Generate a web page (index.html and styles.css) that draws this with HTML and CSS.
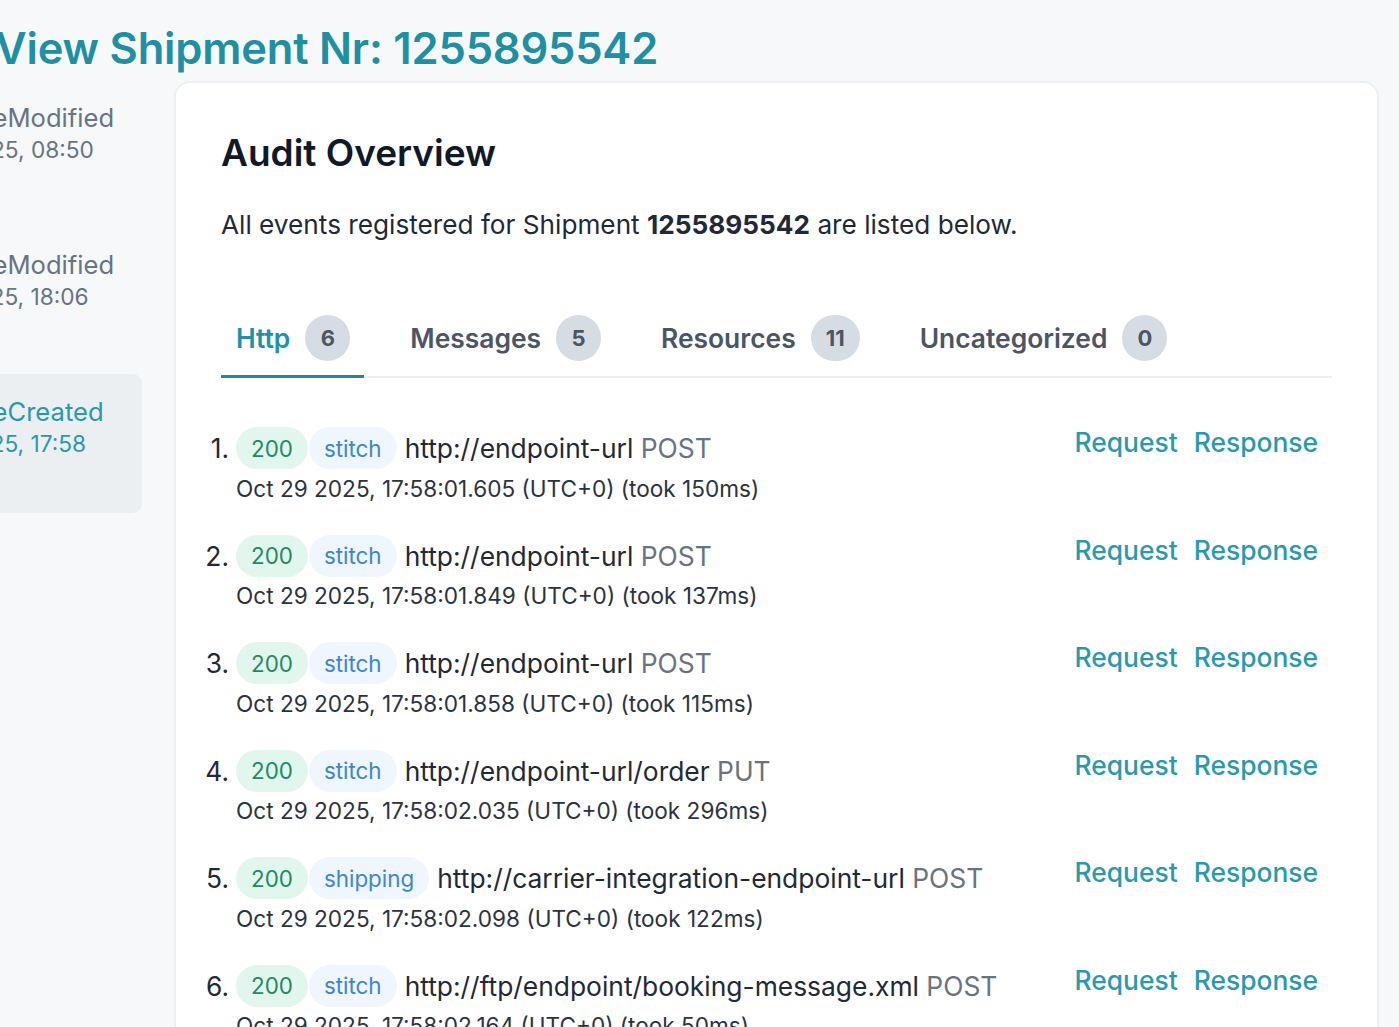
FILE: index.html
```html
<!DOCTYPE html>
<html lang="en">
<head>
<meta charset="utf-8">
<title>View Shipment</title>
<link rel="stylesheet" href="styles.css">
</head>
<body>
<div class="page">
  <h1 class="title">View Shipment Nr: 1255895542</h1>
  <div class="layout">
    <aside class="sidebar">
      <div class="event">
        <div class="event-name">ReferenceModified</div>
        <div class="event-date">Oct 30 2025, 08:50</div>
      </div>
      <div class="event">
        <div class="event-name">ReferenceModified</div>
        <div class="event-date">Oct 29 2025, 18:06</div>
      </div>
      <div class="event active">
        <div class="event-name">ReferenceCreated</div>
        <div class="event-date">Oct 29 2025, 17:58</div>
      </div>
    </aside>
    <main class="card">
      <h2 class="card-title">Audit Overview</h2>
      <p class="intro">All events registered for Shipment <strong>1255895542</strong> are listed below.</p>
      <nav class="tabs">
        <div class="tab active">Http <span class="count">6</span></div>
        <div class="tab">Messages <span class="count">5</span></div>
        <div class="tab">Resources <span class="count">11</span></div>
        <div class="tab">Uncategorized <span class="count">0</span></div>
      </nav>
      <ol class="calls">
        <li class="call">
          <div class="call-main">
            <div class="call-line"><span class="num">1.</span><span class="badge ok">200</span><span class="badge src">stitch</span><span class="url">http://endpoint-url <span class="method">POST</span></span></div>
            <div class="call-time">Oct 29 2025, 17:58:01.605 (UTC+0) (took 150ms)</div>
          </div>
          <div class="links"><a>Request</a><a>Response</a></div>
        </li>
        <li class="call">
          <div class="call-main">
            <div class="call-line"><span class="num">2.</span><span class="badge ok">200</span><span class="badge src">stitch</span><span class="url">http://endpoint-url <span class="method">POST</span></span></div>
            <div class="call-time">Oct 29 2025, 17:58:01.849 (UTC+0) (took 137ms)</div>
          </div>
          <div class="links"><a>Request</a><a>Response</a></div>
        </li>
        <li class="call">
          <div class="call-main">
            <div class="call-line"><span class="num">3.</span><span class="badge ok">200</span><span class="badge src">stitch</span><span class="url">http://endpoint-url <span class="method">POST</span></span></div>
            <div class="call-time">Oct 29 2025, 17:58:01.858 (UTC+0) (took 115ms)</div>
          </div>
          <div class="links"><a>Request</a><a>Response</a></div>
        </li>
        <li class="call">
          <div class="call-main">
            <div class="call-line"><span class="num">4.</span><span class="badge ok">200</span><span class="badge src">stitch</span><span class="url">http://endpoint-url/order <span class="method">PUT</span></span></div>
            <div class="call-time">Oct 29 2025, 17:58:02.035 (UTC+0) (took 296ms)</div>
          </div>
          <div class="links"><a>Request</a><a>Response</a></div>
        </li>
        <li class="call">
          <div class="call-main">
            <div class="call-line"><span class="num">5.</span><span class="badge ok">200</span><span class="badge src">shipping</span><span class="url">http://carrier-integration-endpoint-url <span class="method">POST</span></span></div>
            <div class="call-time">Oct 29 2025, 17:58:02.098 (UTC+0) (took 122ms)</div>
          </div>
          <div class="links"><a>Request</a><a>Response</a></div>
        </li>
        <li class="call">
          <div class="call-main">
            <div class="call-line"><span class="num">6.</span><span class="badge ok">200</span><span class="badge src">stitch</span><span class="url">http://ftp/endpoint/booking-message.xml <span class="method">POST</span></span></div>
            <div class="call-time">Oct 29 2025, 17:58:02.164 (UTC+0) (took 50ms)</div>
          </div>
          <div class="links"><a>Request</a><a>Response</a></div>
        </li>
      </ol>
    </main>
  </div>
</div>
</body>
</html>
```

FILE: styles.css
```css
html, body {
  margin: 0;
  padding: 0;
}

body {
  background: #f7f8fa;
  font-family: Inter, "Noto Sans", sans-serif;
  color: #1f2937;
  overflow: hidden;
  height: 1027px;
}

.page {
  margin-left: -116px;
  padding-right: 20px;
}

.title {
  margin: 0 0 4px 111px;
  font-size: 43.5px;
  line-height: 56px;
  font-weight: 600;
  color: #1f8fa1;
  padding-top: 20px;
  letter-spacing: -0.2px;
}

.layout {
  display: flex;
  gap: 32px;
  align-items: flex-start;
}

.sidebar {
  width: 258px;
  flex: none;
  display: flex;
  flex-direction: column;
  gap: 8px;
}

.event {
  height: 139px;
  box-sizing: border-box;
  padding: 22px 0 0 0;
  border-radius: 9px;
  color: #687384;
  white-space: nowrap;
}

.event.active {
  background: #eceff2;
  color: #2a98ab;
}

.event-name {
  font-size: 25.6px;
  line-height: 32px;
}

.event-date {
  font-size: 22.7px;
  line-height: 31px;
}

.card {
  flex: 1;
  margin-top: 1px;
  background: #ffffff;
  border: 2px solid #eceff3;
  border-radius: 16px;
  padding: 46px 45px 0 45px;
  min-height: 1000px;
}

.card-title {
  margin: 0;
  font-size: 37px;
  line-height: 48px;
  font-weight: 600;
  color: #111827;
}

.intro {
  margin: 28px 0 0 0;
  font-size: 26.2px;
  line-height: 40px;
  color: #1f2937;
}

.intro strong {
  font-weight: 700;
}

.tabs {
  display: flex;
  gap: 31px;
  margin-top: 54px;
  border-bottom: 2px solid #ebeff3;
}

.tab {
  display: flex;
  align-items: center;
  gap: 15px;
  padding: 16px 14px 14px 15px;
  margin-bottom: -2px;
  border-bottom: 3px solid transparent;
  font-size: 26.4px;
  font-weight: 600;
  color: #4b5565;
}

.tab.active {
  color: #2390a3;
  border-bottom-color: #1d8a9c;
}

.count {
  min-width: 45px;
  height: 46px;
  box-sizing: border-box;
  padding: 0 15px;
  border-radius: 999px;
  background: #d6dce3;
  color: #4b5565;
  font-size: 22px;
  font-weight: 700;
  display: flex;
  align-items: center;
  justify-content: center;
}

.calls {
  list-style: none;
  margin: 33px 0 0 0;
  padding: 0;
}

.call {
  display: flex;
  justify-content: space-between;
  align-items: flex-start;
  padding: 15px 14px 15px 15px;
}

.call-line {
  display: flex;
  align-items: center;
  height: 44px;
  font-size: 26.4px;
  white-space: pre;
}

.num {
  width: 31px;
  margin-left: -31px;
  padding-right: 7px;
  box-sizing: border-box;
  text-align: right;
  color: #1f2937;
}

.badge {
  height: 42px;
  display: flex;
  align-items: center;
  padding: 0 15px;
  border-radius: 999px;
  font-size: 22.4px;
}

.badge.ok {
  background: #e1f7ed;
  color: #248a66;
  margin-right: 1px;
}

.badge.src {
  background: #eff6fd;
  color: #3d86d1;
  margin-right: 8px;
}

.url {
  color: #1f2937;
}

.method {
  color: #6b7280;
}

.call-time {
  margin-top: 3.5px;
  font-size: 22.6px;
  line-height: 30px;
  color: #2b3340;
}

.links {
  display: flex;
  gap: 16px;
  font-size: 26.4px;
  line-height: 32px;
  font-weight: 500;
}

.links a {
  color: #2a99ae;
  cursor: pointer;
}
```
